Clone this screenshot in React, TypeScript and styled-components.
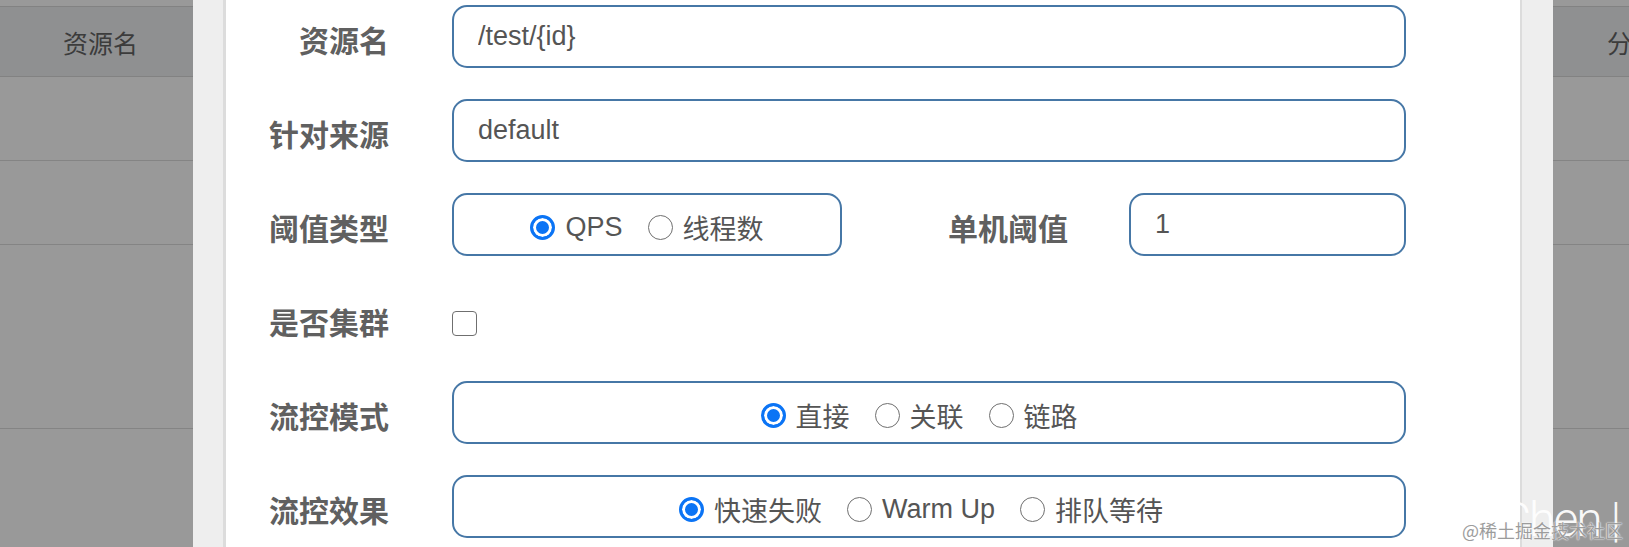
import React from "react";
import styled, { createGlobalStyle } from "styled-components";

const GlobalStyle = createGlobalStyle`
  html, body {
    margin: 0;
    padding: 0;
    width: 1629px;
    height: 547px;
    overflow: hidden;
    background: #999;
    font-family: "Liberation Sans", "Noto Sans CJK SC", sans-serif;
  }
`;

const S = {
  Page: styled.div`
    position: relative;
    display: flex;
    width: 1629px;
    height: 547px;
    overflow: hidden;
  `,
  Table: styled.div<{ $w: number; $pad: number }>`
    width: ${(p) => p.$w}px;
    flex-shrink: 0;
    background: #999;
    padding-top: 6px;
    overflow: hidden;
    color: #3c3c3c;
    font-size: 25px;
    white-space: nowrap;
    div {
      padding-left: ${(p) => p.$pad}px;
    }
  `,
  TableHead: styled.div`
    height: 69px;
    border-top: 1px solid #828282;
    border-bottom: 1px solid #828282;
    background: #8f9091;
    display: flex;
    align-items: center;
  `,
  TableRow: styled.div<{ $h: number }>`
    height: ${(p) => p.$h}px;
    border-bottom: 1px solid #848484;
  `,
  Gutter: styled.div<{ $side: "left" | "right" }>`
    flex-shrink: 0;
    width: 30px;
    background: #eeeeee;
    ${(p) =>
      p.$side === "left"
        ? "border-right: 3px solid #dcdcdc;"
        : "border-left: 2px solid #dcdcdc; width: 31px;"}
  `,
  Modal: styled.div`
    flex: 1;
    background: #fff;
    padding-top: 5px;
    display: flex;
    flex-direction: column;
    gap: 31px;
  `,
  Row: styled.div`
    display: flex;
    height: 63px;
  `,
  Label: styled.div<{ $w: number }>`
    width: ${(p) => p.$w}px;
    flex-shrink: 0;
    box-sizing: border-box;
    padding-top: 6px;
    line-height: 57px;
    text-align: right;
    font-family: "Noto Sans CJK SC", sans-serif;
    font-weight: 700;
    font-size: 30px;
    color: #606060;
  `,
  Input: styled.input<{ $w: number; $ml: number }>`
    box-sizing: border-box;
    width: ${(p) => p.$w}px;
    height: 63px;
    margin: 0 0 0 ${(p) => p.$ml}px;
    padding: 0 0 0 24px;
    border: 2px solid #4677a6;
    border-radius: 15px;
    outline: none;
    background: #fff;
    font-family: "Liberation Sans", "Noto Sans CJK SC", sans-serif;
    font-size: 27px;
    color: #555;
  `,
  RadioBox: styled.div<{ $w: number; $shift: number }>`
    box-sizing: border-box;
    width: ${(p) => p.$w}px;
    height: 63px;
    margin-left: 63px;
    border: 2px solid #4677a6;
    border-radius: 15px;
    display: flex;
    align-items: center;
    justify-content: center;
    gap: 25px;
    padding-top: 6px;
    padding-right: ${(p) => p.$shift}px;
  `,
  Option: styled.label`
    display: flex;
    align-items: center;
    gap: 10px;
    font-size: 27px;
    color: #555;
    white-space: nowrap;
  `,
  Radio: styled.span<{ $on?: boolean }>`
    box-sizing: border-box;
    width: 25px;
    height: 25px;
    border-radius: 50%;
    flex-shrink: 0;
    ${(p) =>
      p.$on
        ? "border: 3px solid #0b74f5; background: #0b74f5; box-shadow: inset 0 0 0 3px #fff;"
        : "border: 1.5px solid #6f6f6f; background: #fff;"}
  `,
  CheckCell: styled.div`
    margin-left: 63px;
    padding-top: 9px;
    display: flex;
    align-items: center;
  `,
  Check: styled.span`
    box-sizing: border-box;
    width: 25px;
    height: 25px;
    border: 1.5px solid #6f6f6f;
    border-radius: 4px;
    background: #fff;
  `,
  Mark: styled.div`
    position: absolute;
    right: 6px;
    bottom: 7px;
    display: flex;
    flex-direction: column;
    align-items: flex-end;
    pointer-events: none;
  `,
  MarkBig: styled.span`
    font-family: Roboto, sans-serif;
    font-weight: 300;
    font-size: 48px;
    letter-spacing: -2px;
    color: rgba(255, 255, 255, 0.95);
    line-height: 44px;
    margin-bottom: -22px;
    margin-right: 4px;
  `,
  MarkSmall: styled.span`
    font-family: "Noto Sans CJK SC", sans-serif;
    font-size: 18px;
    color: #9c9c9c;
    text-shadow: 0 0 2px #fff, 0 0 1px #fff;
    line-height: 20px;
  `,
};

const rowHeights = [83, 83, 183, 118];

const TableSide = ({ w, pad, title }: { w: number; pad: number; title: string }) => (
  <S.Table $w={w} $pad={pad}>
    <S.TableHead>{title}</S.TableHead>
    {rowHeights.map((h, i) => (
      <S.TableRow key={i} $h={h} />
    ))}
  </S.Table>
);

const Options = ({ items, w, shift }: { items: string[]; w: number; shift: number }) => (
  <S.RadioBox $w={w} $shift={shift}>
    {items.map((t, i) => (
      <S.Option key={t}>
        <S.Radio $on={i === 0} />
        {t}
      </S.Option>
    ))}
  </S.RadioBox>
);

export default function App() {
  return (
    <>
      <GlobalStyle />
      <S.Page>
        <TableSide w={193} pad={63} title="资源名" />
        <S.Gutter $side="left" />
        <S.Modal>
          <S.Row>
            <S.Label $w={163}>资源名</S.Label>
            <S.Input $w={954} $ml={63} readOnly defaultValue="/test/{id}" />
          </S.Row>
          <S.Row>
            <S.Label $w={163}>针对来源</S.Label>
            <S.Input $w={954} $ml={63} readOnly defaultValue="default" />
          </S.Row>
          <S.Row>
            <S.Label $w={163}>阈值类型</S.Label>
            <Options items={["QPS", "线程数"]} w={390} shift={0} />
            <S.Label $w={226}>单机阈值</S.Label>
            <S.Input $w={277} $ml={61} readOnly defaultValue="1" />
          </S.Row>
          <S.Row>
            <S.Label $w={163}>是否集群</S.Label>
            <S.CheckCell>
              <S.Check />
            </S.CheckCell>
          </S.Row>
          <S.Row>
            <S.Label $w={163}>流控模式</S.Label>
            <Options items={["直接", "关联", "链路"]} w={954} shift={20} />
          </S.Row>
          <S.Row>
            <S.Label $w={163}>流控效果</S.Label>
            <Options items={["快速失败", "Warm Up", "排队等待"]} w={954} shift={16} />
          </S.Row>
        </S.Modal>
        <S.Gutter $side="right" />
        <TableSide w={76} pad={54} title="分" />
        <S.Mark>
          <S.MarkBig>Chen |</S.MarkBig>
          <S.MarkSmall>@稀土掘金技术社区</S.MarkSmall>
        </S.Mark>
      </S.Page>
    </>
  );
}
